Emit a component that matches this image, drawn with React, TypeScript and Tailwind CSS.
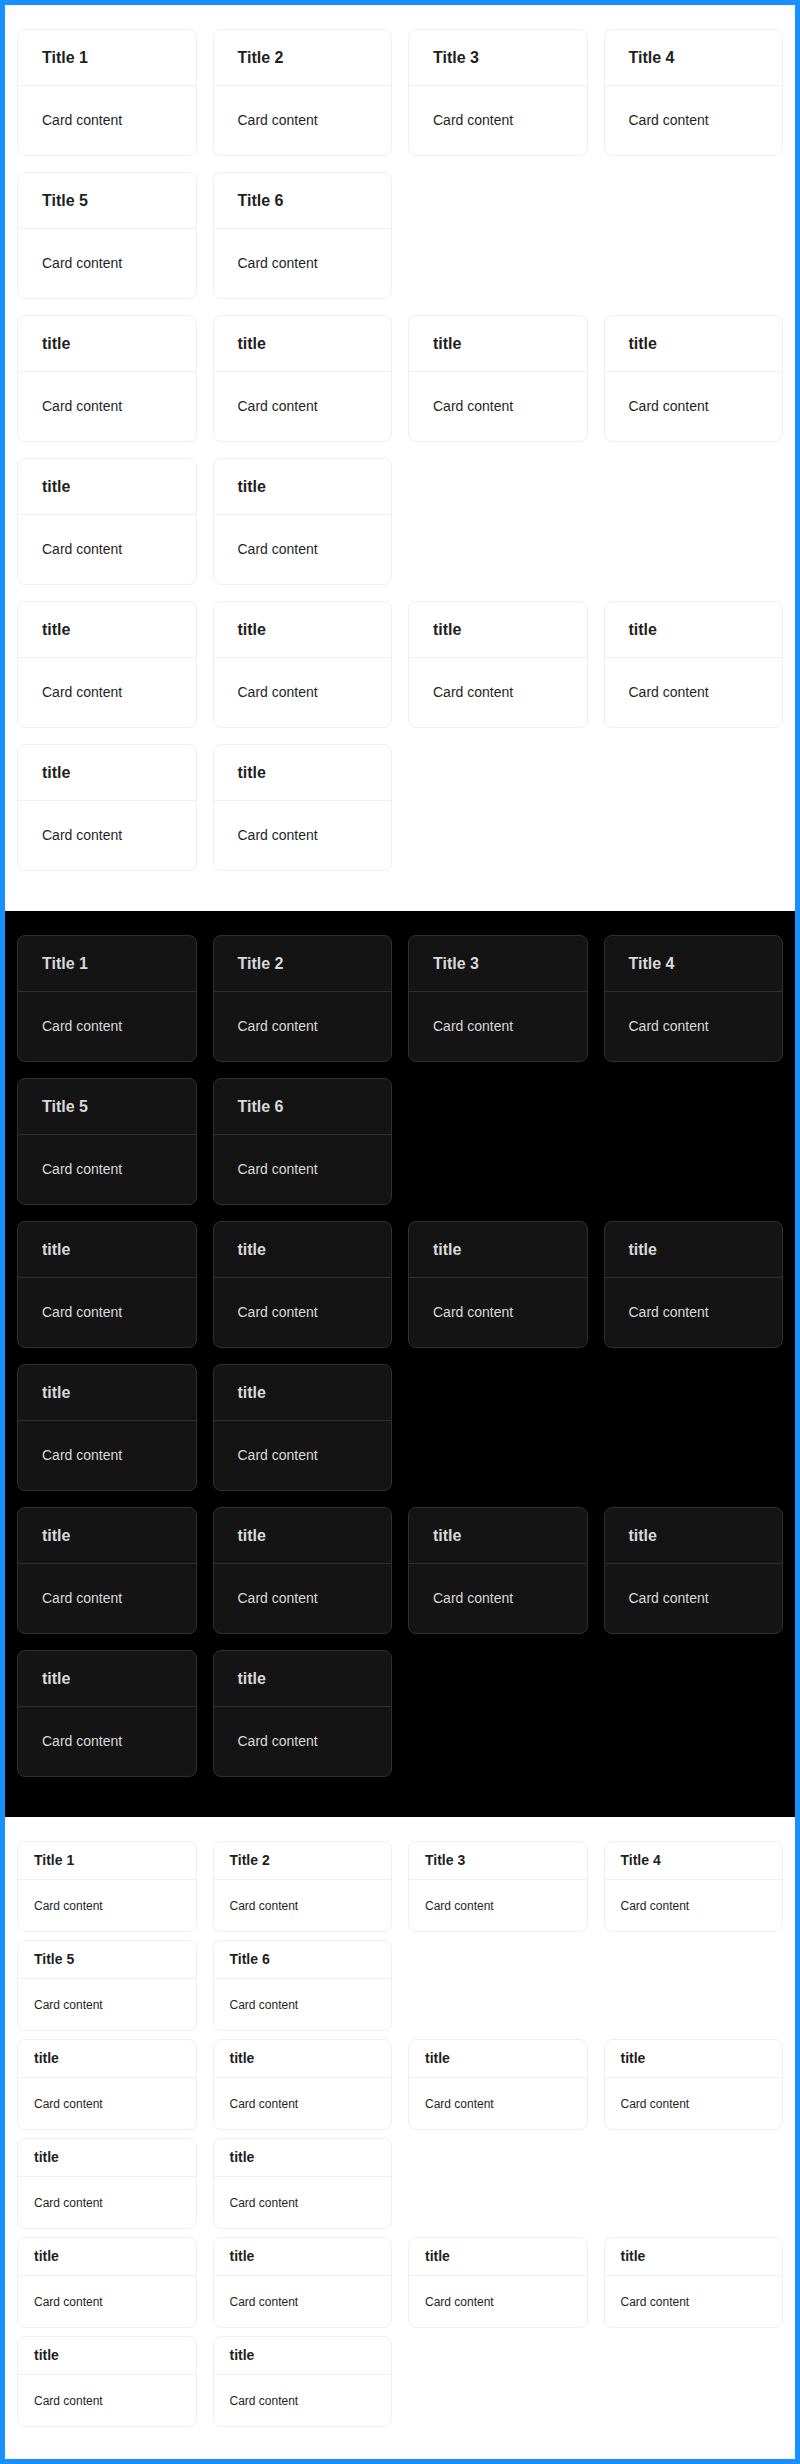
import type { ReactNode } from "react";

type Variant = "light" | "dark" | "small";

const groups: string[][] = [
  ["Title 1", "Title 2", "Title 3", "Title 4", "Title 5", "Title 6"],
  ["title", "title", "title", "title", "title", "title"],
  ["title", "title", "title", "title", "title", "title"],
];

function Card({ title, variant, children }: { title: string; variant: Variant; children: ReactNode }) {
  if (variant === "small") {
    return (
      <div className="rounded-lg border border-[#f0f0f0] bg-white">
        <div className="flex h-[38px] items-center border-b border-[#f0f0f0] px-4 text-[14px] font-bold text-[#1f1f1f]">
          {title}
        </div>
        <div className="flex h-[51px] items-center px-4 text-[12px] text-[#1f1f1f]">{children}</div>
      </div>
    );
  }

  const dark = variant === "dark";
  return (
    <div
      className={
        dark
          ? "rounded-lg border border-[#303030] bg-[#141414]"
          : "rounded-lg border border-[#f0f0f0] bg-white"
      }
    >
      <div
        className={
          dark
            ? "flex h-[56px] items-center border-b border-[#303030] px-6 text-[16px] font-bold text-[#d9d9d9]"
            : "flex h-[56px] items-center border-b border-[#f0f0f0] px-6 text-[16px] font-bold text-[#1f1f1f]"
        }
      >
        {title}
      </div>
      <div
        className={
          dark
            ? "flex h-[69px] items-center px-6 text-[14px] text-[#d9d9d9]"
            : "flex h-[69px] items-center px-6 text-[14px] text-[#1f1f1f]"
        }
      >
        {children}
      </div>
    </div>
  );
}

function Section({ variant }: { variant: Variant }) {
  const small = variant === "small";
  return (
    <section
      className={
        variant === "dark"
          ? "bg-black px-3 pt-6 pb-10"
          : small
          ? "bg-white px-3 pt-6 pb-8"
          : "bg-white px-3 pt-6 pb-10"
      }
    >
      <div className={small ? "grid grid-cols-4 gap-x-4 gap-y-2" : "grid grid-cols-4 gap-4"}>
        {groups.map((g, gi) =>
          g.map((t, i) => (
            <div key={`${gi}-${i}`} className={i === 0 ? "col-start-1" : ""}>
              <Card title={t} variant={variant}>
                Card content
              </Card>
            </div>
          ))
        )}
      </div>
    </section>
  );
}

export default function App() {
  return (
    <div className="min-h-[2464px] border-[5px] border-[#1890ff] bg-white font-['Liberation_Sans',Arial,sans-serif]">
      <Section variant="light" />
      <Section variant="dark" />
      <Section variant="small" />
    </div>
  );
}
